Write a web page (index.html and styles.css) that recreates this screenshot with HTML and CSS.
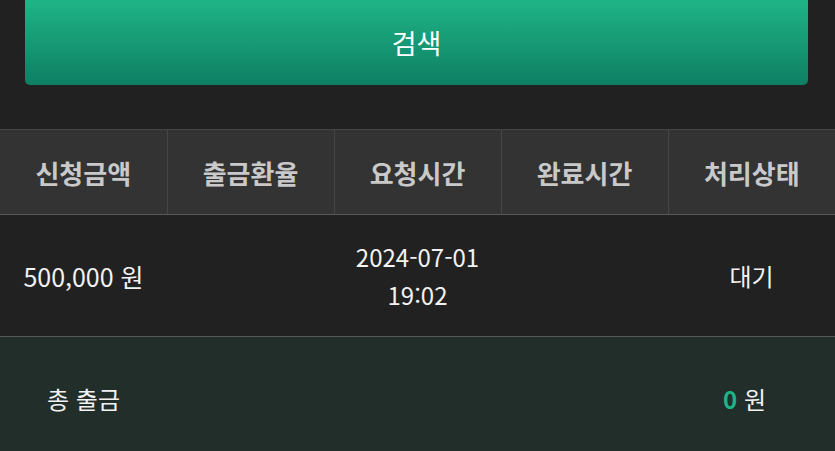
FILE: index.html
```html
<!DOCTYPE html>
<html lang="ko">
<head>
<meta charset="utf-8">
<link rel="stylesheet" href="styles.css">
</head>
<body>
<div class="search-wrap">
  <button class="search-btn">검색</button>
</div>
<table class="list">
  <thead>
    <tr>
      <th>신청금액</th>
      <th>출금환율</th>
      <th>요청시간</th>
      <th>완료시간</th>
      <th>처리상태</th>
    </tr>
  </thead>
  <tbody>
    <tr>
      <td class="amount">500,000 원</td>
      <td></td>
      <td>2024-07-01<br>19:02</td>
      <td></td>
      <td>대기</td>
    </tr>
  </tbody>
</table>
<div class="total">
  <span class="total-label">총 출금</span>
  <span class="total-value"><b>0</b> 원</span>
</div>
</body>
</html>
```
FILE: styles.css
```css
html, body {
  margin: 0;
  padding: 0;
  background: #212121;
  font-family: "Noto Sans CJK KR", "Noto Sans", sans-serif;
  color: #f2f2f2;
  height: 451px;
  overflow: hidden;
}
.search-wrap {
  display: flow-root;
  padding: 0 27px 0 25px;
  height: 129px;
}
.search-btn {
  display: block;
  width: 100%;
  height: 89px;
  margin-top: -4px;
  border: 0;
  border-radius: 5px;
  background: linear-gradient(to bottom, #20b788, #0e7f63);
  color: #ffffff;
  font-family: inherit;
  font-size: 27px;
  padding: 4px 0 0;
}
.list {
  width: 100%;
  border-collapse: collapse;
  table-layout: fixed;
}
.list th {
  height: 84px;
  background: #333333;
  color: #c9c9c9;
  font-size: 26px;
  font-weight: 700;
  border-top: 1px solid #454545;
  border-bottom: 1px solid #585858;
  border-left: 1px solid #454545;
  padding: 0;
}
.list th:first-child { border-left: 0; }
.list td {
  height: 121px;
  text-align: center;
  font-size: 24px;
  line-height: 38px;
  border-bottom: 1px solid #585858;
  padding: 0;
}
.list td.amount { font-size: 25px; }
.total {
  display: flex;
  justify-content: space-between;
  align-items: center;
  height: 122px;
  background: #212e2a;
  padding: 0 69px 0 47px;
  font-size: 24px;
}
.total-value b {
  color: #1fb487;
  font-weight: 700;
}
```
